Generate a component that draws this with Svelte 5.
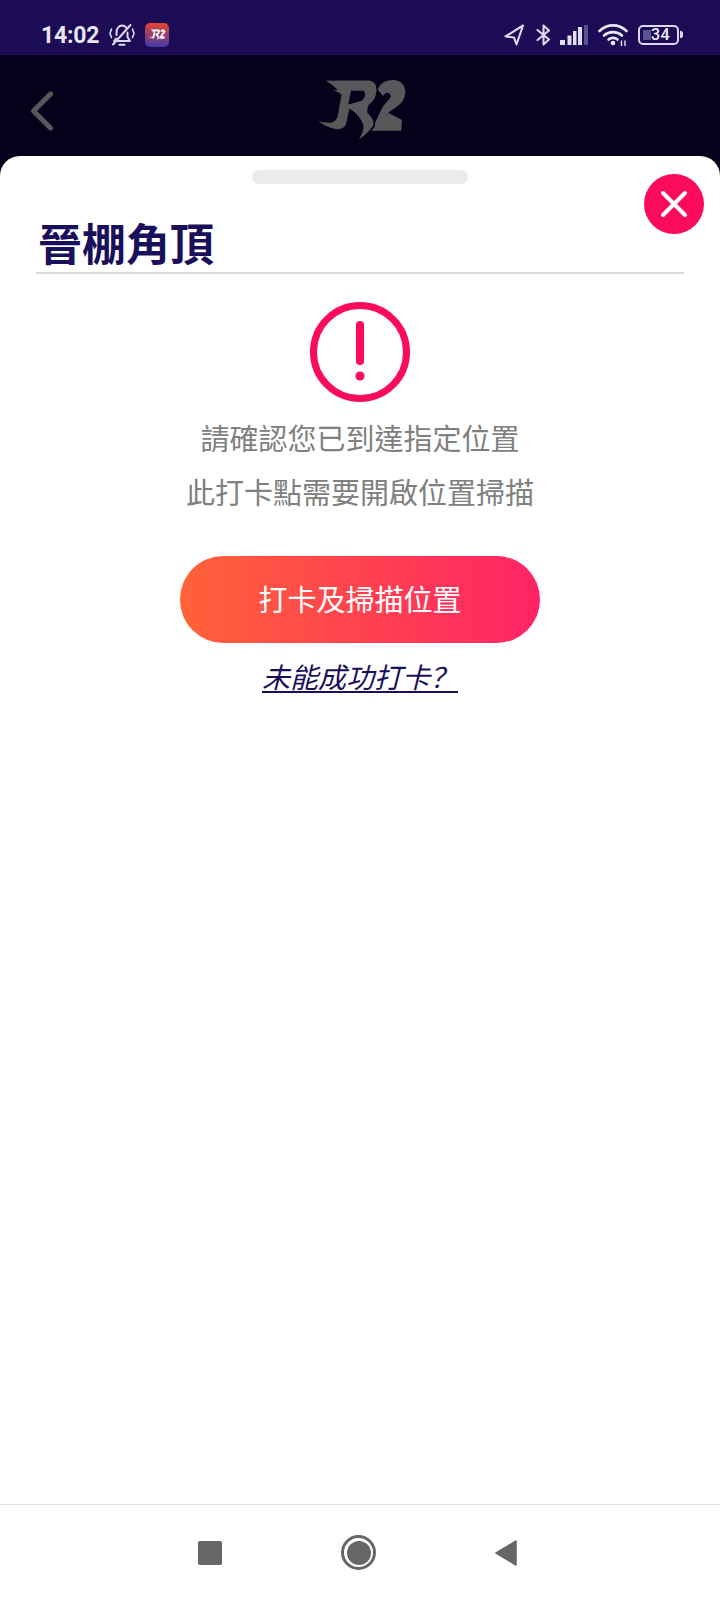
<script>
	const title = "晉棚角頂";
	const lines = ["請確認您已到達指定位置", "此打卡點需要開啟位置掃描"];
</script>

<div class="page">
	<div class="statusbar">
		<div class="status-left">
			<span class="time">14:02</span>
			<svg class="bell" width="26" height="24" viewBox="0 0 26 24" fill="none" stroke="#dcd8ee" stroke-width="2" stroke-linecap="round" stroke-linejoin="round">
				<path d="M7.500 12V9.500C7.500 5.500 10 2.500 13 2.500c2 0 3.500.9 4.500 2.500M18.500 9.500V14l2.500 4H8.500M5 18l2-2.500" />
				<path d="M4 21.500 21.500 2" />
				<path d="M2.500 6 1 10.500l1.500 4M23.500 6l1.500 4.500-1.500 4" stroke-width="1.600" />
				<path d="M10.500 21.800h5" />
			</svg>
			<svg class="app-icon" width="24" height="24" viewBox="0 0 24 24">
				<defs>
					<linearGradient id="appbg" x1="0" y1="0" x2="0" y2="1">
						<stop offset="0" stop-color="#e8432f" />
						<stop offset="1" stop-color="#3f3aa8" />
					</linearGradient>
				</defs>
				<rect width="24" height="24" rx="5" fill="url(#appbg)" />
				<g transform="translate(0.800 4.400) scale(0.062)">
					<path fill="#f4f2f6" d="M232 58Q246 30 278 30 316 32 316 68 314 95 288 112L264 128 306 150 304 182 214 182 248 110 272 82Q274 68 260 68 252 70 250 78Z" />
					<path fill="#f4f2f6" stroke="#8a3a6a" stroke-width="5" fill-rule="evenodd" d="M68 30 205 28Q234 30 232 62 230 92 208 106 202 118 205 128 228 150 222 168 205 195 168 217 190 185 188 165 175 135 150 120L140 165Q130 182 110 180 75 175 45 148 75 158 95 155 110 150 112 130L122 75Q110 62 82 63L108 58Q95 45 68 30ZM155 65 148 100 184 90Q198 75 190 65Z" />
				</g>
			</svg>
		</div>
		<div class="status-right">
			<svg class="ic-arrow" width="20" height="22" viewBox="0 0 20 22" fill="none" stroke="#dcd8ee" stroke-width="2.100" stroke-linejoin="round">
				<path d="M19 1.500 1.500 12.500l8.500 1 2.500 7z" />
			</svg>
			<svg class="ic-bt" width="15" height="22" viewBox="0 0 15 22" fill="none" stroke="#dcd8ee" stroke-width="2.100" stroke-linejoin="round" stroke-linecap="round">
				<path d="M1.500 6 13 15.500 7.500 20.500V1.500L13 6.500 1.500 16" />
			</svg>
			<svg width="28" height="20" viewBox="0 0 28 20">
				<rect x="0" y="15" width="5" height="5" fill="#e2dff0" />
				<rect x="7.500" y="10.500" width="4" height="9.500" fill="#e2dff0" />
				<rect x="13" y="6" width="3.500" height="14" fill="#e2dff0" />
				<rect x="18" y="2" width="4" height="18" fill="#e2dff0" />
				<rect x="24" y="0" width="4" height="20" fill="#5a4f8f" />
			</svg>
			<svg width="30" height="23" viewBox="0 0 30 23" fill="none" stroke="#e8e6f3" stroke-width="2.600" stroke-linecap="round">
				<path d="M1.500 8C9.500 .500 20.500 .500 28.500 8" />
				<path d="M6 12.500C11 8 19 8 24 12.500" />
				<path d="M10.500 16.500C13 14.300 17 14.300 19.500 16.500" />
				<circle cx="15" cy="20" r="2.300" fill="#e8e6f3" stroke="none" />
				<path d="M23.500 18v4.500M27 18v4.500" stroke-width="1.400" />
			</svg>
			<div class="battery">
				<div class="battery-body">
					<span class="battery-fill"></span>
					<span class="battery-num">34</span>
				</div>
				<span class="battery-tip"></span>
			</div>
		</div>
	</div>

	<div class="topbar">
		<svg class="back" width="24" height="40" viewBox="0 0 24 40" fill="none" stroke="#58585a" stroke-width="5" stroke-linecap="round" stroke-linejoin="round">
			<path d="M20.500 3 3.500 20l17 17" />
		</svg>
		<svg class="logo" width="120" height="80" viewBox="0 0 360 240">
			<path fill="#58585a" d="M232 58Q246 30 278 30 316 32 316 68 314 95 288 112L264 128 306 150 304 182 214 182 248 110 272 82Q274 68 260 68 252 70 250 78Z" />
			<path fill="#58585a" stroke="#05011a" stroke-width="5" fill-rule="evenodd" d="M68 30 205 28Q234 30 232 62 230 92 208 106 202 118 205 128 228 150 222 168 205 195 168 217 190 185 188 165 175 135 150 120L140 165Q130 182 110 180 75 175 45 148 75 158 95 155 110 150 112 130L122 75Q110 62 82 63L108 58Q95 45 68 30ZM155 65 148 100 184 90Q198 75 190 65Z" />
		</svg>
	</div>

	<div class="sheet">
		<div class="handle"></div>
		<button class="close" aria-label="close">
			<svg width="30" height="30" viewBox="0 0 30 30" fill="none" stroke="#fff" stroke-width="4" stroke-linecap="round">
				<path d="M4 4 26 26M26 4 4 26" />
			</svg>
		</button>
		<h1 class="title">{title}</h1>
		<div class="content">
			<svg class="alert" width="100" height="100" viewBox="0 0 100 100" fill="none">
				<circle cx="50" cy="50" r="46.500" stroke="#fb0b5d" stroke-width="7" />
				<path d="M50 23V59" stroke="#fb0b5d" stroke-width="8" stroke-linecap="round" />
				<circle cx="50" cy="74" r="4.500" fill="#fb0b5d" />
			</svg>
			<div class="message">
				{#each lines as line}
					<p>{line}</p>
				{/each}
			</div>
			<button class="cta">打卡及掃描位置</button>
			<a class="help" href="#help">未能成功打卡？</a>
		</div>
	</div>

	<div class="navbar">
		<span class="nav-square"></span>
		<span class="nav-home"><span></span></span>
		<svg width="24" height="28" viewBox="0 0 24 28">
			<path d="M21 2V26L1 14z" fill="#666" stroke="#666" stroke-width="1.500" stroke-linejoin="round" />
		</svg>
	</div>
</div>

<style>
	:global(body) {
		margin: 0;
		background: #fff;
	}
	.page {
		width: 720px;
		height: 1600px;
		display: flex;
		flex-direction: column;
		background: #05011a;
		font-family: "Noto Sans CJK TC", "Noto Sans", sans-serif;
		overflow: hidden;
	}
	.statusbar {
		height: 55px;
		box-sizing: border-box;
		padding: 14px 37px 0 41px;
		display: flex;
		align-items: center;
		justify-content: space-between;
		background: #1c0c55;
		color: #e8e6f3;
	}
	.status-left {
		display: flex;
		align-items: center;
	}
	.time {
		font-family: Roboto, sans-serif;
		font-size: 23px;
		font-weight: 700;
		letter-spacing: -0.2px;
		padding-top: 1px;
	}
	.bell {
		margin-left: 10px;
	}
	.app-icon {
		margin-left: 10px;
	}
	.status-right {
		display: flex;
		align-items: center;
		gap: 10px;
	}
	.ic-arrow {
		margin-right: 2px;
	}
	.ic-bt {
		margin-right: -1px;
	}
	.battery {
		display: flex;
		align-items: center;
		gap: 1px;
	}
	.battery-body {
		position: relative;
		width: 33px;
		height: 16px;
		border: 2px solid #dcd8ee;
		border-radius: 5px;
		display: flex;
		align-items: center;
		justify-content: center;
		padding-left: 4px;
	}
	.battery-fill {
		position: absolute;
		left: 3px;
		top: 3px;
		bottom: 3px;
		width: 8px;
		background: #5d5391;
	}
	.battery-num {
		position: relative;
		font-family: Roboto, sans-serif;
		font-size: 16px;
		font-weight: 500;
		color: #f0eef7;
		letter-spacing: 0.5px;
	}
	.battery-tip {
		width: 3px;
		height: 7px;
		background: #dcd8ee;
		border-radius: 0 2px 2px 0;
	}
	.topbar {
		height: 101px;
		position: relative;
		display: flex;
		align-items: center;
		justify-content: center;
	}
	.back {
		position: absolute;
		left: 30px;
		top: 36px;
	}
	.logo {
		margin-top: 9px;
	}
	.sheet {
		flex: 1;
		position: relative;
		background: #fff;
		border-radius: 20px 20px 0 0;
		padding: 14px 36px 0;
		display: flex;
		flex-direction: column;
	}
	.handle {
		width: 216px;
		height: 14px;
		align-self: center;
		background: #ebebeb;
		border-radius: 7px;
	}
	.close {
		position: absolute;
		top: 18px;
		right: 16px;
		width: 60px;
		height: 60px;
		padding: 0;
		border: 0;
		border-radius: 50%;
		background: #fb0b5d;
		display: flex;
		align-items: center;
		justify-content: center;
	}
	.title {
		margin: 26px 0 0;
		padding: 0 0 0 2px;
		height: 62px;
		line-height: 64px;
		font-size: 44px;
		font-weight: 700;
		color: #1a0f5a;
		border-bottom: 2px solid #dcdcdc;
	}
	.content {
		display: flex;
		flex-direction: column;
		align-items: center;
		padding-top: 28px;
	}
	.message {
		margin-top: 8px;
		color: #808080;
		font-size: 29px;
		line-height: 54px;
		text-align: center;
	}
	.message p {
		margin: 0;
	}
	.cta {
		margin-top: 38px;
		width: 360px;
		height: 87px;
		padding: 0 0 3px;
		border: 0;
		border-radius: 44px;
		background: linear-gradient(90deg, #ff6238, #ff2366);
		color: #fff;
		font-family: inherit;
		font-size: 29px;
	}
	.help {
		margin-top: 13px;
		color: #1a0f5a;
		font-family: "Noto Sans CJK SC", sans-serif;
		font-size: 28px;
		font-style: italic;
		line-height: 40px;
		text-decoration: underline;
		text-underline-offset: 3px;
		text-decoration-thickness: 2px;
	}
	.navbar {
		height: 96px;
		flex-shrink: 0;
		box-sizing: border-box;
		padding: 0 201px 0 198px;
		display: flex;
		align-items: center;
		justify-content: space-between;
		background: #fff;
		border-top: 1px solid #e2e2e2;
	}
	.nav-square {
		width: 24px;
		height: 24px;
		border-radius: 2px;
		background: #666;
	}
	.nav-home {
		width: 35px;
		height: 35px;
		box-sizing: border-box;
		border: 3px solid #666;
		border-radius: 50%;
		display: flex;
		align-items: center;
		justify-content: center;
	}
	.nav-home span {
		width: 24px;
		height: 24px;
		border-radius: 50%;
		background: #666;
	}
</style>
